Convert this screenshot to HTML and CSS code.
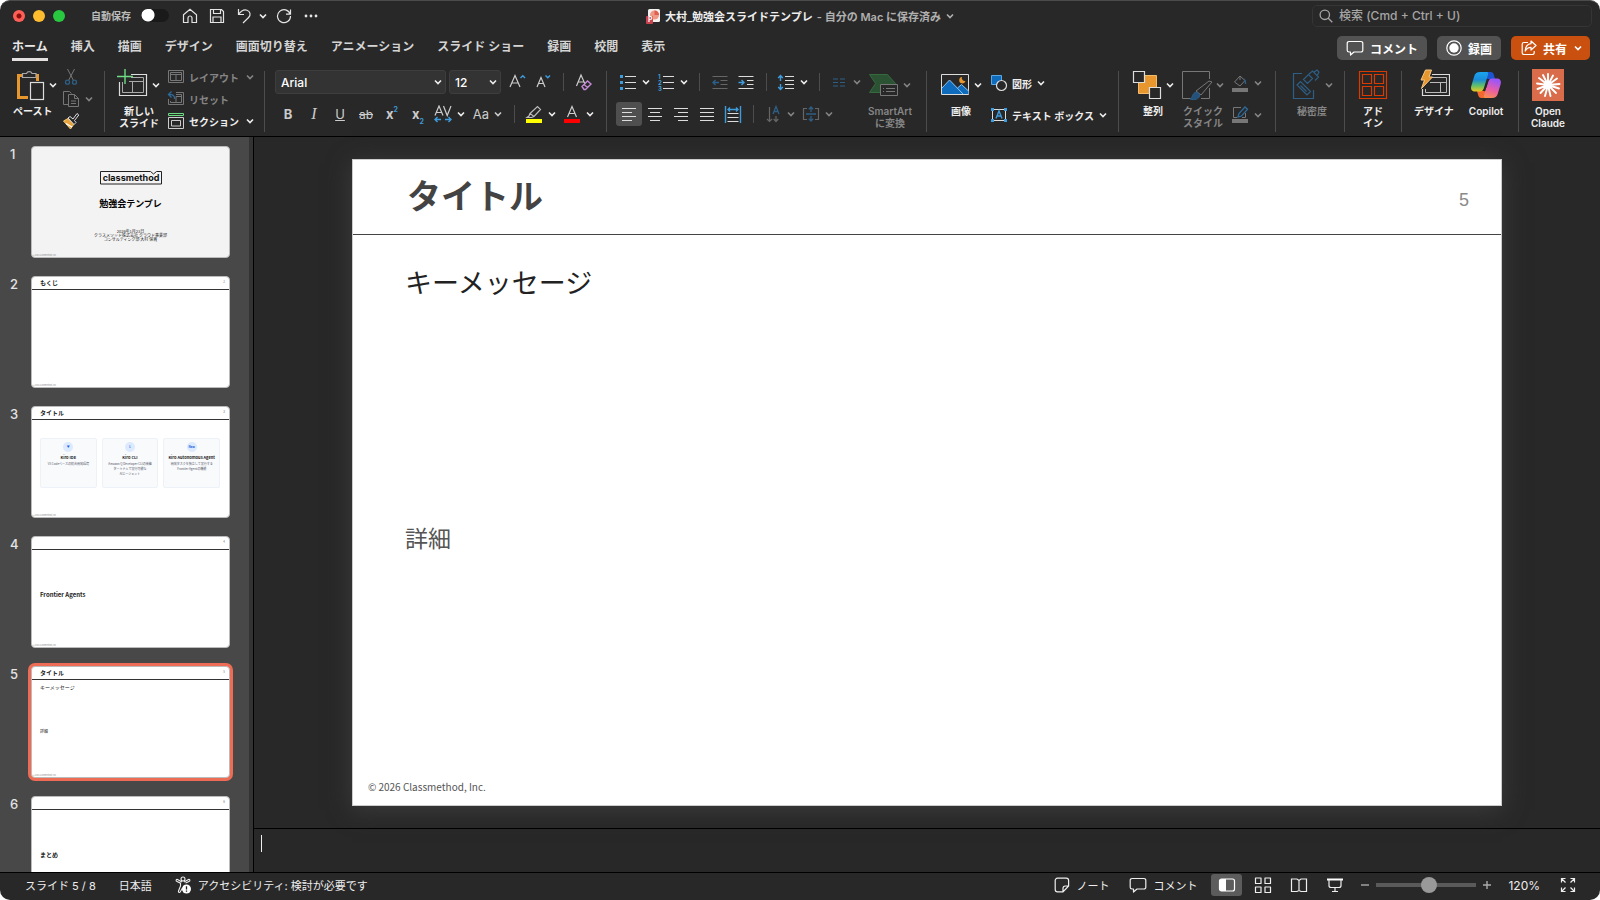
FILE: index.html
```html
<!DOCTYPE html>
<html lang="ja">
<head>
  <meta charset="UTF-8">
  <meta name="viewport" content="width=device-width, initial-scale=1.0">
  <title>大村_勉強会スライドテンプレ</title>
  <link rel="stylesheet" href="styles.css">
</head>
<body>
  <!-- shared icons -->
  <svg class="defs" width="0" height="0">
    <symbol id="chev" viewBox="0 0 10 10"><path d="M2 3.5 5 6.5 8 3.5" fill="none" stroke="currentColor" stroke-width="1.6"/></symbol>
    <symbol id="bubble" viewBox="0 0 18 16"><path d="M3 1.5h12a1.8 1.8 0 0 1 1.8 1.8v6.9A1.8 1.8 0 0 1 15 12H8l-3.500 3v-3H3a1.800 1.800 0 0 1-1.800-1.800V3.300A1.800 1.800 0 0 1 3 1.500z" fill="none" stroke="currentColor" stroke-width="1.200" stroke-linejoin="round"/></symbol>
  </svg>

  <div class="window">
    <!-- title bar -->
    <header class="titlebar">
      <div class="quick">
        <div class="lights">
          <button class="light red" aria-label="閉じる"></button>
          <button class="light yellow" aria-label="しまう"></button>
          <button class="light green" aria-label="拡大"></button>
        </div>
        <label class="autosave">自動保存 <input type="checkbox" class="switch"></label>
        <button class="tool" aria-label="ホーム"><svg width="16" height="16" viewBox="0 0 16 16"><path d="M1.500 6.800 8 1.200l6.500 5.600v7.700H10V10a2 2 0 0 0-4 0v4.500H1.500z"/></svg></button>
        <button class="tool" aria-label="保存"><svg width="16" height="16" viewBox="0 0 16 16"><path d="M1.500 1.500h11l2 2v11h-13zM4.500 1.500v4h7v-4M4 14.500v-5.500h8v5.500"/></svg></button>
        <button class="tool" aria-label="元に戻す"><svg width="16" height="16" viewBox="0 0 16 16"><path d="M2.500 1v5.500H8M2.500 6.500C5 3 8 1.200 11 2.200c3.500 1.200 4 5 1.600 7.300L7 15"/></svg></button>
        <button class="tool undo-more" aria-label="その他"><svg class="chev"><use href="#chev"/></svg></button>
        <button class="tool" aria-label="やり直し"><svg width="16" height="16" viewBox="0 0 16 16"><path d="M14.200 6.200A6.500 6.500 0 1 0 14.500 8M14.500 1.500v4.700H10"/></svg></button>
        <button class="tool" aria-label="メニュー"><svg width="16" height="16" viewBox="0 0 16 16"><g class="dots"><circle cx="3" cy="8" r="1.400"/><circle cx="8" cy="8" r="1.400"/><circle cx="13" cy="8" r="1.400"/></g></svg></button>
      </div>
      <div class="doc">
        <svg width="16" height="16" viewBox="0 0 16 16"><rect x="3" y="1" width="12" height="13" rx="1.500" fill="#f4f1f1"/><circle cx="9.500" cy="7" r="4.500" fill="#ef9a86"/><path d="M9.500 2.500A4.500 4.500 0 0 1 14 7H9.500z" fill="#e0604f"/><rect x="1" y="8" width="7" height="8" rx="1" fill="#c9434f"/><text x="3" y="14" font-size="7" font-weight="700" fill="#fff">P</text></svg>
        <span class="doc-name">大村_勉強会スライドテンプレ</span>
        <span class="doc-state">- 自分の Mac に保存済み</span>
        <svg class="chev"><use href="#chev"/></svg>
      </div>
      <div class="search">
        <svg width="14" height="14" viewBox="0 0 14 14"><path d="M9.500 9.500 13.300 13.300M10.500 5.800a4.700 4.700 0 1 1-9.400 0 4.700 4.700 0 0 1 9.400 0z" fill="none" stroke="#a5a5a5" stroke-width="1.300"/></svg>
        <input type="search" placeholder="検索 (Cmd + Ctrl + U)" aria-label="検索">
      </div>
    </header>

    <!-- tabs -->
    <div class="tabbar">
      <nav class="tabs">
        <a href="#" class="active">ホーム</a>
        <a href="#">挿入</a>
        <a href="#">描画</a>
        <a href="#">デザイン</a>
        <a href="#">画面切り替え</a>
        <a href="#">アニメーション</a>
        <a href="#">スライド ショー</a>
        <a href="#">録画</a>
        <a href="#">校閲</a>
        <a href="#">表示</a>
      </nav>
      <div class="actions">
        <button class="pill"><svg width="18" height="16"><use href="#bubble"/></svg>コメント</button>
        <button class="pill"><svg width="16" height="16" viewBox="0 0 16 16"><circle cx="8" cy="8" r="7.200" fill="none" stroke="#fff" stroke-width="1.200"/><circle cx="8" cy="8" r="4.700" fill="#fff"/></svg>録画</button>
        <button class="pill share"><svg width="16" height="16" viewBox="0 0 16 16"><path d="M7 2.500H3A1.800 1.800 0 0 0 1.200 4.300v8.400A1.800 1.800 0 0 0 3 14.500h8.400a1.800 1.800 0 0 0 1.800-1.800V11M10 1l5 4.500L10 10V7.300C7 7.300 5.500 8.500 4.200 11 4.500 6.500 6.500 4 10 3.700z" fill="none" stroke="#fff" stroke-width="1.200" stroke-linejoin="round"/></svg>共有<svg class="chev thin"><use href="#chev"/></svg></button>
      </div>
    </div>

    <!-- ribbon -->
    <div class="ribbon">
      <div class="group g-paste">
        <button class="big">
          <span class="big-top"><svg width="32" height="32" viewBox="0 0 32 32"><path d="M10 6.500H4.500v22H14M18 6.500h5.500V12" fill="none" stroke="#e8962e" stroke-width="3"/><path d="M8.500 8.500v-4h4a3 3 0 0 1 5.500 0h4v4z" fill="#282828" stroke="#aaa" stroke-width="1.200"/><rect x="16.500" y="13.500" width="13" height="17" fill="#282828" stroke="#ddd" stroke-width="1.200"/></svg><svg class="chev"><use href="#chev"/></svg></span>
          <span class="big-label">ペースト</span>
        </button>
        <div class="stack">
          <button class="row off" aria-label="切り取り"><svg width="18" height="18" viewBox="0 0 18 18"><path d="M5.500 1 11.500 12.500M12.500 1 6.500 12.500" stroke="#777" fill="none"/><g stroke="#2d5f86" fill="none" stroke-width="1.300"><circle cx="5.500" cy="14.200" r="2"/><circle cx="12.500" cy="14.200" r="2"/></g></svg></button>
          <button class="row off" aria-label="コピー"><svg width="18" height="18" viewBox="0 0 18 18"><path d="M6 14.500H1.500v-13h6l2 2M6.500 4.500h6l4 4v8h-10zM12.500 4.500v4h4M9 11h5M9 13.500h5" stroke="#777" fill="none"/></svg><svg class="chev"><use href="#chev"/></svg></button>
          <button class="row" aria-label="書式のコピー"><svg width="18" height="18" viewBox="0 0 18 18"><path d="M1.500 9 6 6.500 12 12l-3.500 5z" fill="#e8a33a" stroke="#f4c77a"/><path d="M4 11.500 10 15" stroke="#fff" stroke-width="1.200"/><path d="M6 6 8 4.500 11 7l4-5.500 1.800 1.500L12.500 8.500l1.500 2-2 2z" fill="#282828" stroke="#ddd"/></svg></button>
        </div>
      </div>

      <div class="group g-slides">
        <button class="big">
          <span class="big-top"><svg width="32" height="32" viewBox="0 0 32 32"><path d="M14 5.500h15.500v21h-27V13" fill="none" stroke="#ddd" stroke-width="1.200"/><path d="M14 8.500h12.500v15h-21V13M12 12.500h14.500M15.500 12.500v11" fill="none" stroke="#aaa"/><path d="M8 0v15M0 7.500h16" stroke="#6ddc83" stroke-width="1.400"/></svg><svg class="chev"><use href="#chev"/></svg></span>
          <span class="big-label">新しい<br>スライド</span>
        </button>
        <div class="stack">
          <button class="row off"><svg width="18" height="18" viewBox="0 0 18 18"><path d="M1.500 2.500h15v12h-15zM3.500 4.500h11v8h-11zM3.500 6.500h11M9 6.500v6" fill="none" stroke="#777"/></svg><span class="w52">レイアウト</span><svg class="chev"><use href="#chev"/></svg></button>
          <button class="row off"><svg width="18" height="18" viewBox="0 0 18 18"><path d="M9 2.500h7.500v12h-15V9M9 4.500h5.500v8h-11V11M9 6.500h5.500M9 6.500v6" fill="none" stroke="#777"/><path d="M4.500 1.500 1.500 4.500l3 3M1.500 4.500C6 4 8 6 7.500 9" fill="none" stroke="#2d6a9a" stroke-width="1.300"/></svg><span>リセット</span></button>
          <button class="row"><svg width="18" height="18" viewBox="0 0 18 18"><path d="M1.500 1.500h15v2h-15z" fill="none" stroke="#6ddc83"/><path d="M1.500 5.500h15v11h-15zM4.500 8.500h9v5.500h-9z" fill="none" stroke="#ccc"/></svg><span class="w52">セクション</span><svg class="chev"><use href="#chev"/></svg></button>
        </div>
      </div>

      <div class="group g-font">
        <div class="lines">
          <div class="line">
            <div class="combo font-name"><select aria-label="フォント"><option>Arial</option></select><svg class="chev"><use href="#chev"/></svg></div>
            <div class="combo font-size"><select aria-label="サイズ"><option>12</option></select><svg class="chev"><use href="#chev"/></svg></div>
            <button class="cell" aria-label="拡大"><svg width="18" height="18" viewBox="0 0 18 18"><path d="M2 14 7 2.500 12 14M3.800 10h6.400" class="ln"/><path d="M12.500 5 14.800 2.700 17 5" class="bl"/></svg></button>
            <button class="cell" aria-label="縮小"><svg width="18" height="18" viewBox="0 0 18 18"><path d="M3 14 7 4.500 11 14M4.500 10.500h5" class="ln"/><path d="M11.500 2.500 13.800 4.800 16 2.500" class="bl"/></svg></button>
            <span class="sep"></span>
            <button class="cell" aria-label="書式のクリア"><svg width="18" height="18" viewBox="0 0 18 18"><path d="M1.500 13 6 2l4 9M3.200 9H9" class="ln"/><path d="M7 13.500 12.500 8l3.500 3-5.500 5.500H9zM9 11.500l3.500 3" fill="none" stroke="#c58ad4" stroke-width="1.400"/></svg></button>
          </div>
          <div class="line">
            <button class="cell letter"><b>B</b></button>
            <button class="cell letter"><i>I</i></button>
            <button class="cell letter"><u>U</u></button>
            <button class="cell letter"><s>ab</s></button>
            <button class="cell letter bold">x<sup>2</sup></button>
            <button class="cell letter bold">x<sub>2</sub></button>
            <button class="drop" aria-label="文字の間隔"><svg width="18" height="18" viewBox="0 0 18 18"><path d="M1 10.500 5 1l4 9.500M2.500 7.500h5M9.500 1l3.700 9.500L17 1" class="ln"/><path d="M1 14.500h6M11 14.500h6M3.500 12 1 14.500 3.500 17M14.500 12 17 14.500 14.500 17" class="bl"/></svg><svg class="chev"><use href="#chev"/></svg></button>
            <button class="drop letter">Aa<svg class="chev"><use href="#chev"/></svg></button>
            <span class="sep"></span>
            <button class="drop" aria-label="蛍光ペン"><svg width="18" height="18" viewBox="0 0 18 18"><path d="M5 8.500 12.500 1.500l3 3L9 11.500zM5 8.500 4 11l-2 1.500h4.500L9 11.500" fill="none" stroke="#bbb" stroke-width="1.200"/><path d="M1 14h16v4H1z" fill="#ff0"/></svg><svg class="chev"><use href="#chev"/></svg></button>
            <button class="drop" aria-label="フォントの色"><svg width="18" height="18" viewBox="0 0 18 18"><path d="M4.500 12 9 1.500 13.500 12M6 8.500h6" class="ln"/><path d="M1 14h16v4H1z" fill="red"/></svg><svg class="chev"><use href="#chev"/></svg></button>
          </div>
        </div>
      </div>

      <div class="group g-para">
        <div class="lines">
          <div class="line">
            <button class="drop" aria-label="箇条書き"><svg width="18" height="18" viewBox="0 0 18 18"><path d="M1 2h3v3H1zM1 8h3v3H1zM1 14h3v3H1z" fill="#3e9bdc"/><path d="M6 3.500h11M6 9.500h11M6 15.500h11" class="wl"/></svg><svg class="chev"><use href="#chev"/></svg></button>
            <button class="drop" aria-label="段落番号"><svg width="18" height="18" viewBox="0 0 18 18"><g fill="#3e9bdc" font-size="6" font-weight="700"><text x="1" y="6">1</text><text x="1" y="12">2</text><text x="1" y="18">3</text></g><path d="M6 3.500h11M6 9.500h11M6 15.500h11" class="wl"/></svg><svg class="chev"><use href="#chev"/></svg></button>
            <span class="sep"></span>
            <button class="cell off" aria-label="インデントを減らす"><svg width="18" height="18" viewBox="0 0 18 18"><path d="M1.500 3.500h15M9.500 7.500h7M9.500 11.500h7M1.500 15.500h15" stroke="#666"/><path d="M8 9.500H2M4.500 7 2 9.500 4.500 12" fill="none" stroke="#2d5f86" stroke-width="1.400"/></svg></button>
            <button class="cell" aria-label="インデントを増やす"><svg width="18" height="18" viewBox="0 0 18 18"><path d="M1.500 3.500h15M10 7.500h6.500M10 11.500h6.500M1.500 15.500h15" class="wl"/><path d="M1.500 9.500H7M4.500 7 7 9.500 4.500 12" class="bl"/></svg></button>
            <span class="sep"></span>
            <button class="drop" aria-label="行間"><svg width="18" height="18" viewBox="0 0 18 18"><path d="M8 3.500h9M8 7.500h9M8 11.500h9M8 15.500h9" class="wl"/><path d="M3.500 8V2.500M1.200 5 3.500 2.500 5.800 5M3.500 11v5.500M1.200 14l2.300 2.500L5.800 14" class="bl"/></svg><svg class="chev"><use href="#chev"/></svg></button>
            <span class="sep"></span>
            <button class="drop off" aria-label="段組み"><svg width="18" height="18" viewBox="0 0 18 18"><path d="M3 6h5M10 6h5M3 9.500h5M10 9.500h5M3 13h5M10 13h5" stroke="#2d5f86" stroke-width="1.200"/></svg><svg class="chev"><use href="#chev"/></svg></button>
          </div>
          <div class="line">
            <button class="cell on" aria-label="左揃え"><svg width="18" height="18" viewBox="0 0 18 18"><path d="M2 3.500h14M2 7.500h10M2 11.500h14M2 15.500h10" class="wl"/></svg></button>
            <button class="cell" aria-label="中央揃え"><svg width="18" height="18" viewBox="0 0 18 18"><path d="M2 3.500h14M4 7.500h10M2 11.500h14M4 15.500h10" class="wl"/></svg></button>
            <button class="cell" aria-label="右揃え"><svg width="18" height="18" viewBox="0 0 18 18"><path d="M2 3.500h14M6 7.500h10M2 11.500h14M6 15.500h10" class="wl"/></svg></button>
            <button class="cell" aria-label="両端揃え"><svg width="18" height="18" viewBox="0 0 18 18"><path d="M2 3.500h14M2 7.500h14M2 11.500h14M2 15.500h14" class="wl"/></svg></button>
            <button class="cell" aria-label="均等割り付け"><svg width="18" height="18" viewBox="0 0 18 18"><path d="M3.500 8.500h11M3.500 12.500h11M3.500 16.500h11" class="wl"/><path d="M1.500 1v17M16.500 1v17M4 4.500h10M6 2.500 4 4.500l2 2M12 2.500l2 2-2 2" class="bl"/></svg></button>
            <span class="sep"></span>
            <button class="drop off" aria-label="文字列の方向"><svg width="18" height="18" viewBox="0 0 18 18"><path d="M5.500 2v14.500M3 14l2.500 2.500L8 14M12 11v5.500M9.700 14l2.300 2.500 2.300-2.500" fill="none" stroke="#666" stroke-width="1.200"/><path d="M9 9 12 1.500 15 9M10 6.500h4" fill="none" stroke="#2d5f86" stroke-width="1.300"/></svg><svg class="chev"><use href="#chev"/></svg></button>
            <button class="drop off" aria-label="文字の配置"><svg width="18" height="18" viewBox="0 0 18 18"><path d="M5 3.500H1.500v11H5M13 3.500h3.500v11H13" fill="none" stroke="#666" stroke-width="1.200"/><path d="M9 7V2M6.800 4.200 9 2l2.200 2.200M9 11v5M6.800 13.800 9 16l2.200-2.200M4 9h10" fill="none" stroke="#2d5f86" stroke-width="1.300"/></svg><svg class="chev"><use href="#chev"/></svg></button>
          </div>
        </div>
        <button class="big off">
          <span class="big-top"><svg width="32" height="32" viewBox="0 0 32 32"><path d="M1.500 5.500h18l8 9-8 9h-18l6-9z" fill="#2b5233" stroke="#37693f"/><path d="M12.500 15.500h17v11h-17z" fill="#282828" stroke="#777"/><path d="M15 19.500h1M18 19.500h9M15 22.500h1M18 22.500h9" stroke="#777"/></svg><svg class="chev"><use href="#chev"/></svg></span>
          <span class="big-label">SmartArt<br>に変換</span>
        </button>
      </div>

      <div class="group g-insert">
        <button class="big">
          <span class="big-top"><svg width="32" height="32" viewBox="0 0 32 32"><path d="M2.500 5.500h27v20h-27z" fill="#282828" stroke="#ddd"/><path d="M3 19 10.500 11l8 8 4-3.500 7 6.500v3H3z" fill="#0f6cbd"/><path d="M3 19 10.500 11 24 25M18.500 19l4-3.500 7 6.500" fill="none" stroke="#8cc4ee"/><path d="M23 8a3 3 0 0 0 3.500 4 3.200 3.200 0 1 1-3.500-4z" fill="#e8962e"/></svg><svg class="chev"><use href="#chev"/></svg></span>
          <span class="big-label">画像</span>
        </button>
        <div class="stack two">
          <button class="row"><svg width="18" height="18" viewBox="0 0 18 18"><path d="M1.500 1.500h10v9h-10z" fill="#0f6cbd" stroke="#5aa9e6"/><circle cx="11.500" cy="11.500" r="5" fill="#282828" stroke="#ddd" stroke-width="1.200"/></svg><span>図形</span><svg class="chev"><use href="#chev"/></svg></button>
          <button class="row"><svg width="18" height="18" viewBox="0 0 18 18"><path d="M2.500 3.500h13v11h-13z" fill="none" stroke="#ddd"/><path d="M1 2h3v3H1zM14 2h3v3h-3zM1 13h3v3H1zM14 13h3v3h-3z" fill="#3e9bdc"/><path d="M6 12.500 9 5l3 7.500M7 10h4" class="bl"/></svg><span>テキスト ボックス</span><svg class="chev"><use href="#chev"/></svg></button>
        </div>
      </div>

      <div class="group g-arrange">
        <button class="big">
          <span class="big-top"><svg width="32" height="32" viewBox="0 0 32 32"><path d="M7.500 6.500h18v18h-18z" fill="#e8962e" stroke="#f3bb6c"/><path d="M2.500 2.500h11v11h-11zM18.500 18.500h11v11h-11z" fill="#282828" stroke="#ddd" stroke-width="1.200"/></svg><svg class="chev"><use href="#chev"/></svg></span>
          <span class="big-label">整列</span>
        </button>
        <button class="big off">
          <span class="big-top"><svg width="32" height="32" viewBox="0 0 32 32"><path d="M14 29.500H1.500v-27h27V10M28.500 19v10.500H20" fill="none" stroke="#777"/><path d="M15 22 28 12l3 1L20 26z" fill="#282828" stroke="#777"/><path d="M9 30c3-1 2-5 5-6.500 2-1 5 1 4.500 3.500-.500 3-5 4.500-9.500 3z" fill="#24507a" stroke="#2d5f86"/></svg><svg class="chev"><use href="#chev"/></svg></span>
          <span class="big-label">クイック<br>スタイル</span>
        </button>
        <div class="stack two">
          <button class="row off" aria-label="塗りつぶし"><svg width="18" height="18" viewBox="0 0 18 18"><path d="M9 2 3.500 8 9 12l5-5.500zM9 2v4" fill="none" stroke="#777"/><path d="M13 5q2 2 1.500 5" fill="none" stroke="#2d5f86" stroke-width="1.500"/><path d="M1 14h16v4H1z" fill="#777"/></svg><svg class="chev"><use href="#chev"/></svg></button>
          <button class="row off" aria-label="枠線"><svg width="18" height="18" viewBox="0 0 18 18"><path d="M10 1.500H2.500v10H6M14.500 7v4.500H11" fill="none" stroke="#777"/><path d="M7 11l1-3.500L14 1l2.500 2.300-6 6.700z" fill="none" stroke="#2d6a9a" stroke-width="1.300"/><path d="M1 13h16v4H1z" fill="#777"/></svg><svg class="chev"><use href="#chev"/></svg></button>
        </div>
      </div>

      <div class="group g-sens">
        <button class="big off">
          <span class="big-top"><svg width="32" height="32" viewBox="0 0 32 32"><path d="M12 4.500H3.500v25h20V21" fill="none" stroke="#2d5f86" stroke-width="1.200"/><path d="M7 16l3.500-3.500 10 10L17 26zM10.500 16.500l6 6M13.500 10.500l5-5 4 4-5 5zM19 5l3.500-3 6 6-3.500 3.500M23.500 3.500l3.500-2.500 2 2-1.500 3" fill="none" stroke="#2d5f86" stroke-width="1.200"/></svg><svg class="chev"><use href="#chev"/></svg></span>
          <span class="big-label">秘密度</span>
        </button>
      </div>

      <div class="group g-addin">
        <button class="big">
          <span class="big-top"><svg width="32" height="32" viewBox="0 0 32 32"><path d="M2.500 2.500h27v27h-27zM5.500 5.500h9v9h-9zM17.500 5.500h9v9h-9zM5.500 17.500h9v9h-9zM17.500 17.500h9v9h-9z" fill="none" stroke="#d83b01" stroke-width="1.200"/></svg></span>
          <span class="big-label">アド<br>イン</span>
        </button>
      </div>

      <div class="group g-design">
        <button class="big">
          <span class="big-top"><svg width="32" height="32" viewBox="0 0 32 32"><path d="M14 5.500h17.500v21h-27V20" fill="none" stroke="#ddd" stroke-width="1.200"/><path d="M14 8.500h14.500v15h-21V20M12 13.500h16.500M22.500 13.500v10" fill="none" stroke="#bbb"/><path d="M7.500 1h6L11 8h3.500L3.500 19.500 6.500 11H3z" fill="#e8962e" stroke="#f6c987"/></svg></span>
          <span class="big-label">デザイナ</span>
        </button>
        <button class="big">
          <span class="big-top"><svg width="32" height="32" viewBox="0 0 32 32">
            <defs>
              <linearGradient id="ca" x1="0" y1="0" x2="0" y2="1"><stop offset="0" stop-color="#1aa5f0"/><stop offset=".4" stop-color="#1b8bd8"/><stop offset=".7" stop-color="#5fc06a"/><stop offset="1" stop-color="#f0c81e"/></linearGradient>
              <linearGradient id="cb" x1=".3" y1="0" x2="0" y2="1"><stop offset="0" stop-color="#a056f5"/><stop offset=".5" stop-color="#ea5fa4"/><stop offset="1" stop-color="#fb9443"/></linearGradient>
            </defs>
            <path d="M15 3h5.500c2 0 2.800 1.200 3.400 3l1.100 4h-7c-2 0-3-1-3.500-3z" fill="#1c55d2"/>
            <path d="M17 29h-5.500c-2 0-2.800-1.200-3.400-3L7 22h7c2 0 3 1 3.500 3z" fill="#f2682f"/>
            <path d="M10 3h6.500c2 0 2 .800 1.400 3l-4 13c-.700 2-1.500 3.500-3.900 3.500H5C1.500 22.500.500 20 1.300 17l3-10C5.200 4.500 6.800 3 10 3z" fill="url(#ca)"/>
            <path d="M22 29h-6.500c-1.800 0-2.200-.800-1.500-3l4-13c.800-2.200 1.800-3.500 4-3.500H27c3.300 0 4.500 2.500 3.700 5.500l-3 10c-.900 2.500-2.500 4-5.700 4z" fill="url(#cb)"/>
            <path d="M18.300 10 16 17.500l-2.300 4.500" fill="none" stroke="#282828" stroke-width="1.500"/>
          </svg></span>
          <span class="big-label">Copilot</span>
        </button>
      </div>

      <div class="group g-claude">
        <button class="big">
          <span class="big-top"><svg width="32" height="32" viewBox="0 0 32 32"><path d="M0 0h32v32H0z" fill="#d96c4b"/><path d="M16 16V5M16 16l5-9.500M16 16l9-6.500M16 16l11.500-1M16 16l11 3.500M16 16l8 8M16 16l2.500 11M16 16l-3 11M16 16l-7.500 8M16 16l-10.500 4M16 16 5 14.500M16 16 7 9M16 16 11 6" stroke="#fff" stroke-width="1.900" stroke-linecap="round"/></svg></span>
          <span class="big-label">Open<br>Claude</span>
        </button>
      </div>
    </div>

    <!-- slides and editor -->
    <div class="work">
      <aside class="slides">
        <div class="item">
          <span class="num">1</span>
          <div class="thumb cover">
            <svg class="logo" width="62" height="15" viewBox="0 0 62 15"><path d="M.5 1.500h50l3 2.500 3-2.500h5v12.500H.5z" fill="none" stroke="#222"/><text x="31" y="11" text-anchor="middle" font-size="9" font-weight="700" fill="#111">classmethod</text></svg>
            <h3>勉強会テンプレ</h3>
            <p>2026年1月23日<br>クラスメソッド株式会社 クラウド事業部<br>コンサルティング部 大村 保貴</p>
            <small>© 2026 Classmethod, Inc.</small>
          </div>
        </div>
        <div class="item">
          <span class="num">2</span>
          <div class="thumb"><div class="t-head"><b>もくじ</b><i>2</i></div><small>© 2026 Classmethod, Inc.</small></div>
        </div>
        <div class="item">
          <span class="num">3</span>
          <div class="thumb">
            <div class="t-head"><b>タイトル</b><i>3</i></div>
            <div class="t-cards">
              <div class="t-card"><em>▼</em><b>Kiro IDE</b><p>VS Codeベースの統合開発環境</p></div>
              <div class="t-card"><em>L</em><b>Kiro CLI</b><p>Amazon Q Developer CLIの後継<br>ターミナルで実行可能な<br>AIエージェント</p></div>
              <div class="t-card"><em>New</em><b>Kiro Autonomous Agent</b><p>開発タスクを独立して実行する<br>Frontier Agentの機能</p></div>
            </div>
            <small>© 2026 Classmethod, Inc.</small>
          </div>
        </div>
        <div class="item">
          <span class="num">4</span>
          <div class="thumb"><div class="t-head"><b></b><i>4</i></div><h4>Frontier Agents</h4><small>© 2026 Classmethod, Inc.</small></div>
        </div>
        <div class="item current">
          <span class="num">5</span>
          <div class="thumb"><div class="t-head"><b>タイトル</b><i>5</i></div><p class="t-key">キーメッセージ</p><p class="t-detail">詳細</p><small>© 2026 Classmethod, Inc.</small></div>
        </div>
        <div class="item">
          <span class="num">6</span>
          <div class="thumb"><div class="t-head"><b></b><i>6</i></div><h4>まとめ</h4></div>
        </div>
      </aside>

      <main class="editor">
        <div class="stage">
          <article class="slide">
            <div class="slide-head"><h1>タイトル</h1><span>5</span></div>
            <p class="key">キーメッセージ</p>
            <p class="detail">詳細</p>
            <footer>© 2026 Classmethod, Inc.</footer>
          </article>
        </div>
        <div class="notes"><span class="caret"></span></div>
      </main>
    </div>

    <!-- status bar -->
    <footer class="status">
      <div class="status-left">
        <span>スライド 5 / 8</span>
        <button>日本語</button>
        <button class="access"><svg width="18" height="18" viewBox="0 0 18 18"><circle cx="8" cy="3" r="2" fill="none" stroke="#eee" stroke-width="1.100"/><path d="M7 6 2.500 3.500C1 3 .500 5 2 5.600L5.500 7.200V10L3.500 15c-.500 1.500 1.200 2 1.800.800L7.500 12M9 6l4.500-2.500c1.500-.500 2 1.500.500 2.100L10.500 7" fill="none" stroke="#eee" stroke-width="1.100"/><circle cx="11.500" cy="13" r="4.500" fill="#fff"/><path d="M11.500 10.300v3.200M11.500 14.500v1.200" stroke="#222" stroke-width="1.300"/></svg>アクセシビリティ: 検討が必要です</button>
      </div>
      <div class="status-right">
        <button class="with-text"><svg width="16" height="16" viewBox="0 0 16 16"><path d="M3.500 1.200h8.800a2.300 2.300 0 0 1 2.300 2.300V9L9 14.800H3.500a2.300 2.300 0 0 1-2.300-2.300v-9a2.300 2.300 0 0 1 2.300-2.300zM14.600 9h-3.300A2.300 2.300 0 0 0 9 11.300v3.500" fill="none" stroke="#eee" stroke-width="1.200"/></svg>ノート</button>
        <button class="with-text"><svg width="18" height="16"><use href="#bubble"/></svg>コメント</button>
        <div class="views">
          <button class="on" aria-label="標準"><svg width="18" height="18" viewBox="0 0 18 18"><rect x="1.500" y="3" width="15" height="12" rx="2" fill="none" stroke="#fff" stroke-width="1.200"/><path d="M3.500 3H8v12H3.500a2 2 0 0 1-2-2V5a2 2 0 0 1 2-2z" fill="#fff"/></svg></button>
          <button aria-label="一覧"><svg width="18" height="18" viewBox="0 0 18 18"><path d="M1.500 2h5.500v5.500H1.500zM11 2h5.500v5.500H11zM1.500 11H7v5.500H1.500zM11 11h5.500v5.500H11z" fill="none" stroke="#eee" stroke-width="1.200" stroke-linejoin="round"/></svg></button>
          <button aria-label="閲覧"><svg width="18" height="18" viewBox="0 0 18 18"><path d="M1.500 3h5.500l2 1.500L11 3h5.500v12.500H11L9 14.500l-2 1H1.500zM9 4.500v10" fill="none" stroke="#eee" stroke-width="1.200"/></svg></button>
          <button aria-label="スライドショー"><svg width="18" height="18" viewBox="0 0 18 18"><path d="M1 3.500h16" stroke="#fff" stroke-width="2"/><path d="M3 4v5.500A2 2 0 0 0 5 11.500h8a2 2 0 0 0 2-2V4M9 11.500v4M6 15.500h6" fill="none" stroke="#eee" stroke-width="1.200"/></svg></button>
        </div>
        <button class="step" aria-label="縮小"><svg width="10" height="10" viewBox="0 0 10 10"><path d="M1 5h8" stroke="#aaa" stroke-width="1.400"/></svg></button>
        <input type="range" class="zoom" min="0" max="100" value="53" aria-label="ズーム">
        <button class="step" aria-label="拡大"><svg width="10" height="10" viewBox="0 0 10 10"><path d="M1 5h8M5 1v8" stroke="#aaa" stroke-width="1.400"/></svg></button>
        <button class="percent">120%</button>
        <button aria-label="ウィンドウに合わせる"><svg width="16" height="16" viewBox="0 0 16 16"><path d="M5.500 1.500h-4v4M1.500 1.500l4 4M10.500 1.500h4v4M14.500 1.500l-4 4M5.500 14.500h-4v-4M1.500 14.500l4-4M10.500 14.500h4v-4M14.500 14.500l-4-4" fill="none" stroke="#eee" stroke-width="1.200"/></svg></button>
      </div>
    </footer>
  </div>
</body>
</html>
```
FILE: styles.css
```css
* {
  box-sizing: border-box;
  margin: 0;
  padding: 0;
}
body {
  background: #fff;
  font-family: "Inter", "Noto Sans CJK JP", sans-serif;
  font-size: 11px;
  color: #eee;
}
button {
  background: none;
  border: 0;
  color: inherit;
  font: inherit;
  cursor: pointer;
}
svg {
  display: block;
  flex: none;
}
.defs {
  position: absolute;
}
.chev {
  width: 10px;
  height: 10px;
}
.window {
  display: flex;
  flex-direction: column;
  height: 100vh;
  background: #282828;
  border-radius: 10px;
  border-top: 1px solid #4b4b4b;
  overflow: hidden;
}

/* title bar */
.titlebar {
  display: grid;
  grid-template-columns: 1fr auto 1fr;
  align-items: center;
  height: 29px;
  flex: none;
}
.quick {
  display: flex;
  align-items: center;
  padding-left: 13px;
}
.lights {
  display: flex;
  gap: 8px;
  margin-right: 26px;
}
.light {
  width: 12px;
  height: 12px;
  border-radius: 50%;
}
.red {
  background: radial-gradient(circle, #8a0f0a 2px, #ff5f57 3px);
}
.yellow {
  background: #febc2e;
}
.green {
  background: #28c840;
}
.autosave {
  display: flex;
  align-items: center;
  gap: 10px;
  margin-right: 13px;
  font-size: 10px;
  font-weight: 600;
  color: #bbb;
}
.switch {
  appearance: none;
  width: 28px;
  height: 13px;
  border-radius: 7px;
  background: radial-gradient(circle at 7px 6px, #fff 6px, transparent 7px), #1a1a1a;
}
.tool {
  width: 16px;
  margin-right: 11px;
}
.tool path {
  fill: none;
  stroke: #e4e4e4;
  stroke-width: 1.2;
}
.dots {
  fill: #e4e4e4;
}
.undo-more {
  width: 10px;
  margin-left: -5px;
  margin-right: 8px;
}
.doc {
  display: flex;
  align-items: center;
  gap: 4px;
  color: #b0b0b0;
  font-weight: 600;
}
.doc-name {
  color: #eee;
}
.search {
  justify-self: end;
  display: flex;
  align-items: center;
  gap: 6px;
  width: 280px;
  height: 22px;
  margin-right: 8px;
  padding-left: 6px;
  border: 1px solid #353535;
  border-radius: 5px;
}
.search input {
  flex: 1;
  background: none;
  border: 0;
  font: inherit;
  font-size: 12px;
  font-weight: 500;
  color: #eee;
  outline: none;
}
.search input::placeholder {
  color: #a5a5a5;
}

/* tabs */
.tabbar {
  display: flex;
  justify-content: space-between;
  align-items: center;
  height: 34px;
  flex: none;
  padding: 0 10px 0 12px;
}
.tabs {
  display: flex;
  gap: 23px;
}
.tabs a {
  padding-top: 3px;
  height: 28px;
  line-height: 22px;
  font-size: 12px;
  font-weight: 600;
  color: #d4d4d4;
  text-decoration: none;
  white-space: nowrap;
}
.tabs .active {
  border-bottom: 3px solid #e4e0e0;
  color: #e8e8e8;
}
.actions {
  display: flex;
  gap: 10px;
  margin-top: 2px;
}
.pill {
  display: flex;
  align-items: center;
  gap: 6px;
  height: 24px;
  padding: 0 9px;
  border-radius: 5px;
  background: #525252;
  font-size: 12px;
  font-weight: 600;
  color: #fff;
}
.share {
  background: #ca5010;
  padding: 0 7px 0 10px;
}

/* ribbon */
.ribbon {
  display: flex;
  height: 73px;
  flex: none;
  padding-top: 4px;
  border-bottom: 1px solid #000;
  overflow: hidden;
}
.group {
  display: flex;
  flex: none;
  align-items: flex-start;
  position: relative;
}
.group::after {
  content: "";
  position: absolute;
  right: 0;
  top: 3px;
  width: 1px;
  height: 61px;
  background: #4d4d4d;
}
.g-claude::after {
  display: none;
}
.big {
  display: flex;
  flex-direction: column;
  align-items: center;
  gap: 4px;
  padding-top: 1px;
}
.big-top {
  display: flex;
  align-items: center;
  gap: 2px;
}
.big-label {
  font-size: 10px;
  line-height: 12px;
  font-weight: 600;
  white-space: nowrap;
}
.off {
  color: #858585;
}
.stack {
  display: flex;
  flex-direction: column;
  gap: 4px;
}
.two {
  gap: 14px;
  padding-top: 6px;
}
.row {
  display: flex;
  align-items: center;
  gap: 4px;
  height: 18px;
  font-size: 10px;
  font-weight: 600;
  white-space: nowrap;
}
.w52 {
  width: 52px;
  text-align: left;
}
.g-paste {
  width: 105px;
  padding-left: 13px;
  gap: 3px;
}
.g-paste .big-label {
  padding-right: 6px;
}
.g-slides {
  width: 160px;
  padding-left: 12px;
  gap: 6px;
}
.g-font {
  width: 342px;
  padding-left: 10px;
}
.g-para {
  width: 320px;
  padding-left: 9px;
  justify-content: space-between;
  padding-right: 15px;
}
.g-insert {
  width: 192px;
  padding-left: 12px;
  gap: 7px;
}
.g-arrange {
  width: 157px;
  padding-left: 12px;
  gap: 6px;
}
.g-sens {
  width: 69px;
  padding-left: 14px;
}
.g-addin {
  width: 57px;
  padding-left: 12px;
}
.g-design {
  width: 117px;
  padding-left: 12px;
  gap: 15px;
}
.g-claude {
  padding-left: 12px;
}
.lines {
  display: flex;
  flex-direction: column;
  gap: 8px;
  padding-top: 2px;
}
.line {
  display: flex;
  align-items: center;
  height: 24px;
}
.combo {
  display: flex;
  align-items: center;
  height: 24px;
  margin-right: 3px;
  padding: 0 2px 0 5px;
  border: 1px solid #3e3e3e;
  border-radius: 3px;
  background: #333;
}
.combo select {
  flex: 1;
  min-width: 0;
  appearance: none;
  background: none;
  border: 0;
  font: inherit;
  font-size: 12px;
  font-weight: 500;
  color: #fff;
}
.font-name {
  width: 171px;
}
.font-size {
  width: 52px;
}
.cell {
  display: flex;
  align-items: center;
  justify-content: center;
  width: 26px;
  height: 24px;
  border-radius: 3px;
}
.on {
  background: #4f4f4f;
}
.drop {
  display: flex;
  align-items: center;
  justify-content: center;
  gap: 4px;
  width: 38px;
  height: 24px;
}
.sep {
  width: 1px;
  height: 18px;
  margin: 0 7px;
  background: #4d4d4d;
}
.letter {
  font-size: 13px;
  color: #ccc;
}
.letter i {
  font-family: "Liberation Serif", serif;
  font-size: 16px;
}
.letter s {
  font-size: 12px;
}
.letter sup,
.letter sub {
  font-size: 7px;
  color: #3e9bdc;
}
.letter sup {
  align-self: flex-start;
  margin-top: 3px;
}
.letter sub {
  align-self: flex-end;
}
.bold {
  font-weight: 700;
}
.ln {
  fill: none;
  stroke: #ccc;
  stroke-width: 1.2;
}
.wl {
  fill: none;
  stroke: #ddd;
  stroke-width: 1.2;
}
.bl {
  fill: none;
  stroke: #3e9bdc;
  stroke-width: 1.4;
}

/* slide list */
.work {
  display: flex;
  flex: 1;
  min-height: 0;
}
.slides {
  width: 254px;
  flex: none;
  padding: 9px 0 0 10px;
  background: #484848;
  border-right: 1px solid #000;
  box-shadow: inset -4px 0 0 #333;
  overflow: hidden;
}
.item {
  display: flex;
  height: 130px;
}
.num {
  width: 21px;
  font-size: 13px;
  line-height: 16px;
  font-weight: 500;
  color: #e4e4e4;
}
.thumb {
  position: relative;
  width: 199px;
  height: 112px;
  border: 1px solid #bbb;
  border-radius: 4px;
  background: #fff;
  color: #222;
  font-family: "Noto Sans CJK JP", sans-serif;
}
.current .thumb {
  box-shadow: 0 0 0 3px #ee6c55;
}
.cover {
  display: flex;
  flex-direction: column;
  align-items: center;
  background: #f3f3f3;
}
.logo {
  margin-top: 23px;
  font-family: "Inter", sans-serif;
}
.cover h3 {
  margin-top: 12px;
  font-size: 9px;
  line-height: 14px;
  color: #000;
}
.cover p {
  margin-top: 18px;
  font-size: 4px;
  line-height: 4px;
  text-align: center;
}
.thumb small {
  position: absolute;
  left: 1px;
  bottom: 0;
  font-size: 2px;
  line-height: 3px;
  color: #888;
}
.t-head {
  display: flex;
  justify-content: space-between;
  align-items: center;
  height: 13px;
  padding: 0 4px 2px 8px;
  border-bottom: 1px solid #333;
}
.t-head b {
  font-size: 6px;
}
.t-head i {
  font-size: 3px;
  font-style: normal;
  color: #777;
}
.t-cards {
  display: flex;
  gap: 5px;
  padding: 18px 9px 0 8px;
}
.t-card {
  display: flex;
  flex-direction: column;
  align-items: center;
  flex: 1;
  height: 50px;
  padding-top: 3px;
  border: 1px solid #edf2f9;
  border-radius: 2px;
  background: #f8fafc;
}
.t-card em {
  width: 10px;
  height: 10px;
  border-radius: 50%;
  background: #dbeafe;
  color: #1d5be0;
  font-size: 3px;
  line-height: 10px;
  font-style: normal;
  font-weight: 700;
  text-align: center;
}
.t-card b {
  font-size: 4px;
  line-height: 10px;
  white-space: nowrap;
}
.t-card p {
  font-size: 3px;
  line-height: 5px;
  color: #556;
  text-align: center;
  white-space: nowrap;
}
.thumb h4 {
  padding: 40px 0 0 8px;
  font-size: 6px;
  line-height: 10px;
}
.t-key {
  padding: 3px 0 0 8px;
  font-size: 5px;
  line-height: 7px;
}
.t-detail {
  padding: 38px 0 0 8px;
  font-size: 4px;
  line-height: 6px;
}

/* editor */
.editor {
  display: flex;
  flex-direction: column;
  flex: 1;
  min-width: 0;
}
.stage {
  display: flex;
  justify-content: center;
  flex: 1;
  min-height: 0;
  padding: 22px;
}
.slide {
  display: flex;
  flex-direction: column;
  height: 100%;
  aspect-ratio: 16 / 9;
  border: 1px solid #ccc;
  background: #fff;
  box-shadow: 0 4px 22px #3c3c3c;
  font-family: "Noto Sans CJK JP", sans-serif;
}
.slide-head {
  display: flex;
  justify-content: space-between;
  align-items: flex-start;
  height: 75px;
  padding: 0 32px 0 54px;
  border-bottom: 1px solid #444;
}
.slide-head h1 {
  font-size: 34px;
  line-height: 70px;
  color: #434343;
}
.slide-head span {
  font-family: "Liberation Sans", sans-serif;
  font-size: 18px;
  line-height: 80px;
  color: #8a8a8a;
}
.key {
  padding: 27px 52px 0;
  font-size: 27px;
  line-height: 40px;
  color: #222;
}
.detail {
  padding: 217px 52px 0;
  font-size: 23px;
  line-height: 36px;
  color: #555;
}
.slide footer {
  margin-top: auto;
  padding: 0 15px 11px;
  font-size: 10px;
  line-height: 14px;
  color: #555;
}
.notes {
  height: 44px;
  padding: 6px 7px;
  border-top: 1px solid #000;
}
.caret {
  display: block;
  width: 1px;
  height: 17px;
  background: #eee;
}

/* status bar */
.status {
  display: flex;
  justify-content: space-between;
  align-items: center;
  height: 28px;
  flex: none;
  padding: 0 24px 3px 25px;
  border-top: 1px solid #000;
}
.status-left {
  display: flex;
  align-items: center;
  gap: 23px;
}
.status-right {
  display: flex;
  align-items: center;
}
.access,
.with-text {
  display: flex;
  align-items: center;
  gap: 5px;
}
.with-text {
  gap: 6px;
  margin-right: 20px;
}
.views {
  display: flex;
  gap: 5px;
  margin: 0 10px 0 -6px;
}
.views button {
  display: flex;
  align-items: center;
  justify-content: center;
  width: 31px;
  height: 22px;
  border-radius: 3px;
}
.views .on {
  background: #5c5c5c;
}
.step {
  width: 10px;
}
.zoom {
  appearance: none;
  width: 100px;
  height: 16px;
  margin: 0 6px;
  background: linear-gradient(#5a5a5a, #5a5a5a) center / 100% 4px no-repeat;
}
.zoom::-webkit-slider-thumb {
  appearance: none;
  width: 16px;
  height: 16px;
  border-radius: 50%;
  background: #999;
}
.percent {
  margin: 0 20px 0 16px;
  font-size: 12px;
}
```
